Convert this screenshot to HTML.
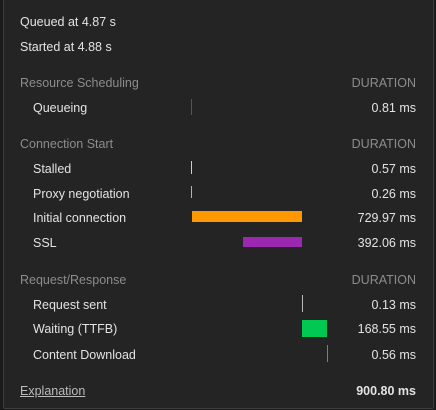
<!DOCTYPE html>
<html><head><style>
html,body{margin:0;padding:0;width:436px;height:410px;background:#1b1b1b;overflow:hidden}
.p{position:absolute;left:3px;top:-1px;width:429px;height:408px;background:#242424;border:1px solid #3c3c3c;border-radius:2px}
.t{position:absolute;font-family:"Liberation Sans",sans-serif;font-size:12.5px;color:#e3e3e3;line-height:16px;white-space:nowrap;transform:translateY(1px)}
.h{color:#8c8c8c}
.r{right:20px;text-align:right}
.b{position:absolute}
</style></head><body>
<div class="p"></div>
<div class="t" style="left:20px;top:13px">Queued at 4.87 s</div>
<div class="t" style="left:20px;top:38px">Started at 4.88 s</div>

<div class="t h" style="left:20px;top:74px">Resource Scheduling</div>
<div class="t h r" style="top:74px">DURATION</div>
<div class="t" style="left:33px;top:99px">Queueing</div>
<div class="t r" style="top:99px">0.81 ms</div>
<div class="b" style="left:191px;top:99px;width:1px;height:16px;background:#555"></div>

<div class="t h" style="left:20px;top:135px">Connection Start</div>
<div class="t h r" style="top:135px">DURATION</div>
<div class="t" style="left:33px;top:160px">Stalled</div>
<div class="t r" style="top:160px">0.57 ms</div>
<div class="b" style="left:191px;top:161px;width:1px;height:13px;background:#ccc"></div>
<div class="t" style="left:33px;top:185px">Proxy negotiation</div>
<div class="t r" style="top:185px">0.26 ms</div>
<div class="b" style="left:191px;top:186px;width:1px;height:12px;background:#d9a0a0"></div>
<div class="t" style="left:33px;top:209px">Initial connection</div>
<div class="t r" style="top:209px">729.97 ms</div>
<div class="b" style="left:192px;top:211px;width:110px;height:11px;background:#ff9800"></div>
<div class="t" style="left:33px;top:234px">SSL</div>
<div class="t r" style="top:234px">392.06 ms</div>
<div class="b" style="left:243px;top:237px;width:59px;height:10px;background:#9c27b0"></div>

<div class="t h" style="left:20px;top:271px">Request/Response</div>
<div class="t h r" style="top:271px">DURATION</div>
<div class="t" style="left:33px;top:296px">Request sent</div>
<div class="t r" style="top:296px">0.13 ms</div>
<div class="b" style="left:302px;top:295px;width:1px;height:17px;background:#bbb"></div>
<div class="t" style="left:33px;top:320px">Waiting (TTFB)</div>
<div class="t r" style="top:320px">168.55 ms</div>
<div class="b" style="left:302px;top:320px;width:25px;height:17px;background:#00c853"></div>
<div class="t" style="left:33px;top:346px">Content Download</div>
<div class="t r" style="top:346px">0.56 ms</div>
<div class="b" style="left:327px;top:345px;width:1px;height:17px;background:#2196f3"></div>

<div class="t" style="left:20px;top:382px;color:#bbb;text-decoration:underline">Explanation</div>
<div class="t r" style="top:382px;font-weight:bold">900.80 ms</div>
</body></html>
